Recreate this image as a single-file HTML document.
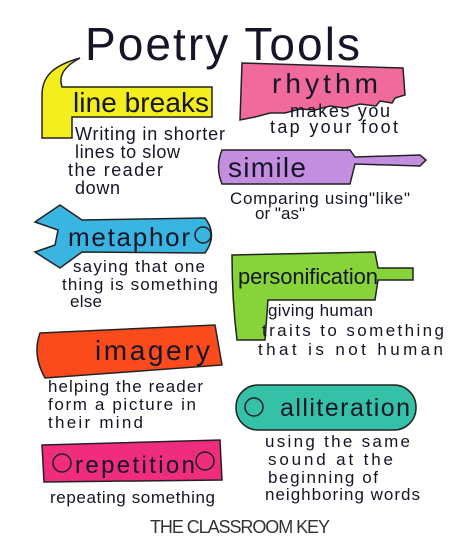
<!DOCTYPE html>
<html><head><meta charset="utf-8"><style>
html,body{margin:0;padding:0;background:#fff;width:474px;height:559px;overflow:hidden}
svg text{font-family:"Liberation Sans",sans-serif;fill:#151528}
</style></head><body>
<svg width="474" height="559" viewBox="0 0 474 559" xmlns="http://www.w3.org/2000/svg">
<g stroke="#222" stroke-width="1.5">
<!-- hammer -->
<path d="M80,58 C55,65 42,75 42,95 L42,138 L72,138 L72,117 L212,117 L212,87 L62,87 C58,75 65,66 80,58 Z" fill="#f4ee1c"/>
<!-- saw -->
<path d="M242,63 L403,68 L405,95 L395,98 L392,103 L380,101 L376,106 L360,104 L345,108 L330,106 L315,110 L300,109 L285,113 L270,113 L255,117 L240,120 Z" fill="#f06a9c"/>
<!-- screwdriver -->
<path d="M222,150 L350,150 L355,157 L420,155 L426,160 L420,166 L355,164 L350,184 L222,184 Q215,167 222,150 Z" fill="#c48ee0"/>
<!-- wrench -->
<path d="M35,222 L60,205 L82,220 L205,218 Q218,235 205,253 L82,252 L60,268 L35,252 L55,245 L58,230 Z" fill="#3ab4e0"/>
<!-- drill -->
<path d="M232,255 L375,252 L378,268 L413,268 L413,280 L378,280 L375,300 L268,300 L265,340 L237,340 Q232,300 232,255 Z" fill="#86d43a"/>
<!-- imagery -->
<path d="M40,333 L215,325 L222,365 L45,378 Q32,355 40,333 Z" fill="#fb4a1c"/>
<!-- alliteration -->
<rect x="236" y="385" width="180" height="45" rx="22" fill="#35c0a8"/>
<!-- repetition -->
<path d="M42,445 L220,440 L222,480 L44,482 Z" fill="#f02c7c"/>
</g>
<circle cx="203" cy="235" r="8" fill="none" stroke="#222" stroke-width="1.5"/>
<circle cx="254" cy="407" r="9" fill="none" stroke="#222" stroke-width="1.5"/>
<circle cx="62" cy="463" r="9" fill="none" stroke="#222" stroke-width="1.5"/>
<circle cx="205" cy="461" r="9" fill="none" stroke="#222" stroke-width="1.5"/>

<text x="85" y="60" font-size="46" textLength="275">Poetry Tools</text>
<text x="73" y="112" font-size="28" textLength="136">line breaks</text>
<text x="75" y="140" font-size="18" textLength="150">Writing in shorter</text>
<text x="75" y="158" font-size="18" textLength="105">lines to slow</text>
<text x="68" y="176" font-size="18" textLength="95">the reader</text>
<text x="75" y="194" font-size="18" textLength="45">down</text>

<text x="272" y="93" font-size="28" textLength="106">rhythm</text>
<text x="290" y="117" font-size="18" textLength="100">makes you</text>
<text x="270" y="133" font-size="18" textLength="128">tap your foot</text>

<text x="228" y="177" font-size="28" textLength="78">simile</text>
<text x="230" y="204" font-size="17" textLength="180">Comparing using"like"</text>
<text x="255" y="219" font-size="17" textLength="50">or "as"</text>

<text x="68" y="246" font-size="26" textLength="122">metaphor</text>
<text x="73" y="272" font-size="17" textLength="132">saying that one</text>
<text x="62" y="290" font-size="17" textLength="156">thing is something</text>
<text x="70" y="307" font-size="17" textLength="32">else</text>

<text x="238" y="284" font-size="22" textLength="140">personification</text>
<text x="268" y="316" font-size="17" textLength="105">giving human</text>
<text x="262" y="336" font-size="17" textLength="182">traits to something</text>
<text x="258" y="355" font-size="17" textLength="185">that is not human</text>

<text x="95" y="360" font-size="28" textLength="115">imagery</text>
<text x="48" y="392" font-size="17" textLength="155">helping the reader</text>
<text x="48" y="410" font-size="17" textLength="148">form a picture in</text>
<text x="48" y="428" font-size="17" textLength="95">their mind</text>

<text x="280" y="416" font-size="25" textLength="130">alliteration</text>
<text x="265" y="447" font-size="17" textLength="145">using the same</text>
<text x="268" y="465" font-size="17" textLength="125">sound at the</text>
<text x="268" y="483" font-size="17" textLength="110">beginning of</text>
<text x="265" y="500" font-size="17" textLength="155">neighboring words</text>

<text x="75" y="473" font-size="24" textLength="120">repetition</text>
<text x="50" y="503" font-size="17" textLength="165">repeating something</text>

<text x="150" y="533" font-size="18" textLength="180" style="fill:#333">THE CLASSROOM KEY</text>
</svg>
</body></html>
